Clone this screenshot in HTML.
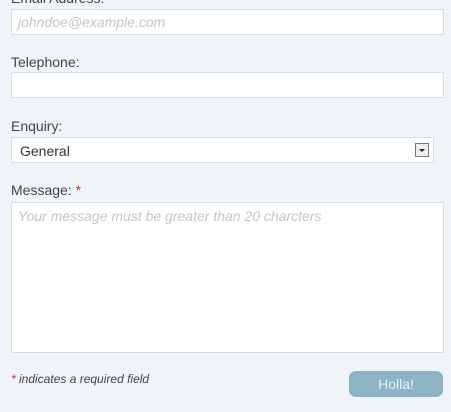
<!DOCTYPE html>
<html><head><style>
body{margin:0;width:451px;height:412px;background:#eef4f8;font-family:"Liberation Sans",sans-serif;position:relative;overflow:hidden;color:#444}
.l{position:absolute;left:11px;font-size:14px;color:#444}
.i{position:absolute;left:11px;width:430px;background:#fff;border:1px solid #d3e0e8;box-sizing:border-box}
.ph{position:absolute;left:6px;font-style:italic;color:#c0c6cc;font-size:14px}
</style></head><body>
<div class="l" style="top:-10px">Email Address:</div>
<div class="i" style="top:9px;height:26px;width:433px"><span class="ph" style="top:4px">johndoe@example.com</span></div>
<div class="l" style="top:54px">Telephone:</div>
<div class="i" style="top:72px;height:26px;width:433px"></div>
<div class="l" style="top:118px">Enquiry:</div>
<div class="i" style="top:137px;height:26px;width:423px"><span style="position:absolute;left:8px;top:5px;font-size:14px;color:#333">General</span>
<div style="position:absolute;right:4px;top:5px;width:14px;height:14px;border:1px solid #777;background:#eee;box-sizing:border-box"><div style="position:absolute;left:3px;top:5px;border-left:3px solid transparent;border-right:3px solid transparent;border-top:3px solid #222"></div></div></div>
<div class="l" style="top:182px">Message: <span style="color:#c0392b">*</span></div>
<div class="i" style="top:202px;height:151px;width:433px"><span class="ph" style="top:5px">Your message must be greater than 20 charcters</span></div>
<div style="position:absolute;left:11px;top:372px;font-size:12px;font-style:italic;color:#444"><span style="color:#c0392b">*</span> indicates a required field</div>
<div style="position:absolute;left:349px;top:371px;width:94px;height:26px;border-radius:7px;background:#8db4c4;color:#e6f0f4;font-size:14px;text-align:center;line-height:26px">Holla!</div>
</body></html>
